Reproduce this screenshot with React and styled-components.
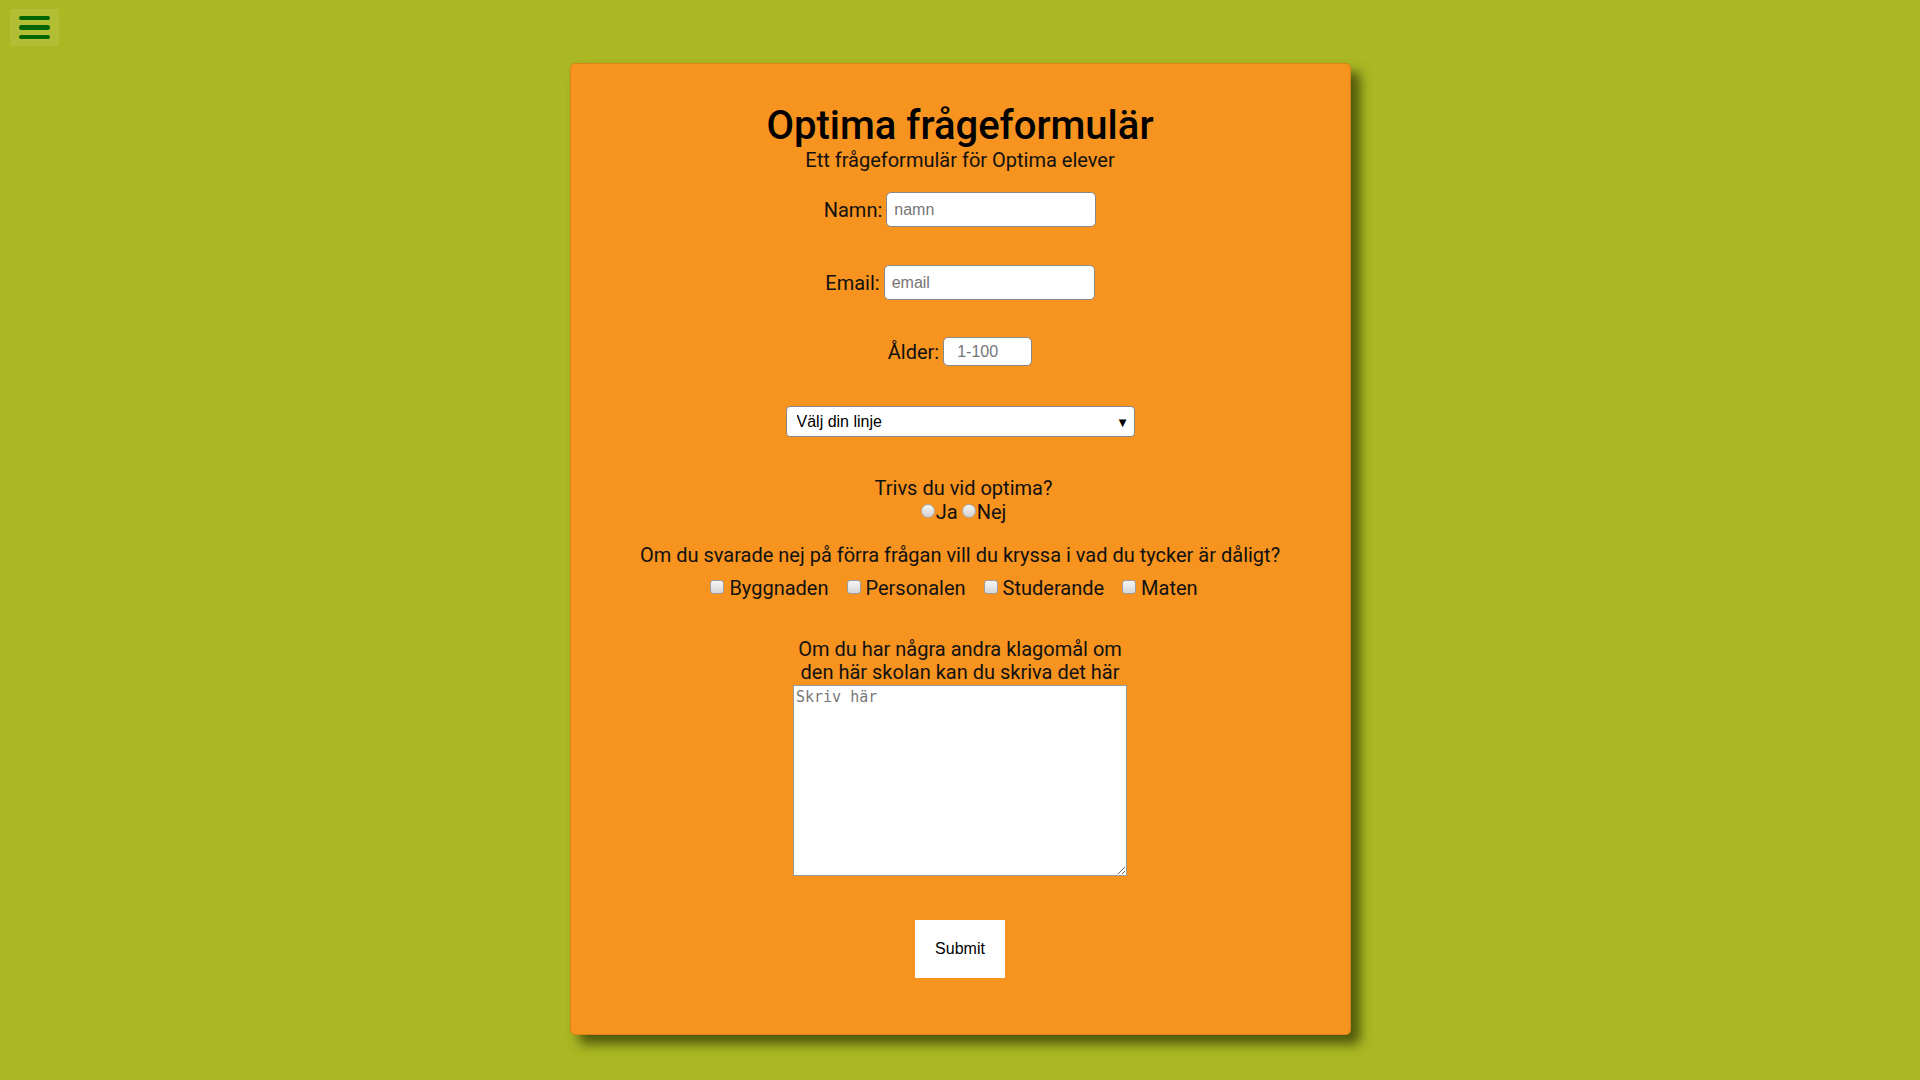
import React from "react";
import styled, { createGlobalStyle } from "styled-components";

const Global = createGlobalStyle`
  html, body { margin: 0; padding: 0; }
  body {
    background: #aab823;
    font-family: Roboto, "Liberation Sans", sans-serif;
    color: #111;
    min-height: 1080px;
  }
`;

const Page = styled.div`
  padding: 9px 10px 40px;
`;

const MenuButton = styled.button`
  display: flex;
  flex-direction: column;
  gap: 5px;
  width: 49px;
  height: 37px;
  padding: 7px 9px;
  box-sizing: border-box;
  background: #b2bf35;
  border: none;
  cursor: pointer;
`;

const Bar = styled.span`
  display: block;
  width: 31px;
  height: 5px;
  border-radius: 3px;
  background: #006400;
`;

const Card = styled.form`
  width: 781px;
  box-sizing: border-box;
  margin: 17px auto 0;
  padding: 40px 20px 56px;
  background: #f7931f;
  border: 1px solid #dc8218;
  border-radius: 5px;
  box-shadow: 9px 9px 12px rgba(40, 45, 0, 0.7);
  display: flex;
  flex-direction: column;
  align-items: center;
`;

const Title = styled.h1`
  margin: 0;
  font-size: 40px;
  line-height: 44px;
  font-weight: 500;
  color: #000;
`;

const Subtitle = styled.p`
  margin: 0;
  font-size: 20px;
  line-height: 24px;
`;

const FieldRow = styled.div`
  display: flex;
  align-items: center;
  gap: 4px;
  margin-top: ${(p) => p.$mt}px;
  font-size: 20px;
`;

const TextInput = styled.input`
  box-sizing: border-box;
  width: ${(p) => p.$w}px;
  height: ${(p) => p.$h}px;
  padding: 0 ${(p) => p.$pl}px;
  border: 1px solid #888;
  border-radius: 5px;
  background: #fff;
  font-family: "Liberation Sans", Arial, sans-serif;
  font-size: 16px;
  &::placeholder { color: #757575; }
`;

const SelectWrap = styled.div`
  position: relative;
  margin-top: 40px;
  &::after {
    content: "▼";
    position: absolute;
    right: 8px;
    top: 50%;
    transform: translateY(-50%);
    font-family: "DejaVu Sans", sans-serif;
    font-size: 10px;
    color: #000;
    pointer-events: none;
  }
`;

const Select = styled.select`
  appearance: none;
  box-sizing: border-box;
  width: 349px;
  height: 31px;
  padding: 0 10px;
  border: 1px solid #888;
  border-radius: 4px;
  background: #fff;
  font-family: "Liberation Sans", Arial, sans-serif;
  font-size: 16px;
  color: #000;
`;

const Question = styled.p`
  margin: ${(p) => p.$mt}px 0 0;
  padding-left: ${(p) => p.$shift || 0}px;
  font-size: 20px;
  line-height: 22px;
  text-align: center;
`;

const ChoiceRow = styled.div`
  display: flex;
  align-items: center;
  gap: ${(p) => p.$gap}px;
  margin-top: ${(p) => p.$mt}px;
  padding-left: ${(p) => p.$pl || 0}px;
  padding-right: ${(p) => p.$pr || 0}px;
  font-size: 20px;
  line-height: 22px;
`;

const Choice = styled.label`
  display: flex;
  align-items: ${(p) => (p.$top ? "flex-start" : "center")};
  gap: ${(p) => p.$gap}px;
`;

const Radio = styled.input.attrs({ type: "radio" })`
  appearance: none;
  width: 14px;
  height: 14px;
  margin: 3px 0 0;
  border-radius: 50%;
  border: 1px solid #aaa;
  background: linear-gradient(#f4f4f4, #d2d2d2);
  box-sizing: border-box;
`;

const Check = styled.input.attrs({ type: "checkbox" })`
  appearance: none;
  width: 14px;
  height: 14px;
  margin: 0 0 3px;
  border-radius: 3px;
  border: 1px solid #9c9c9c;
  background: linear-gradient(#f6f6f6, #d6d6d6);
  box-sizing: border-box;
`;

const AreaLabel = styled.label`
  display: block;
  margin-top: 39px;
  font-size: 20px;
  line-height: 23px;
  text-align: center;
`;

const TextArea = styled.textarea`
  display: block;
  box-sizing: border-box;
  width: 334px;
  height: 191px;
  margin-top: 1px;
  padding: 2px;
  border: 1px solid #999;
  background: #fff;
  font-family: "DejaVu Sans Mono", monospace;
  font-size: 15px;
  resize: both;
  &::placeholder { color: #777; }
`;

const SubmitButton = styled.button`
  margin-top: 44px;
  width: 90px;
  height: 58px;
  border: none;
  background: #fff;
  font-family: "Liberation Sans", Arial, sans-serif;
  font-size: 16px;
  color: #000;
  cursor: pointer;
`;

export default function App() {
  return (
    <>
      <Global />
      <Page>
        <MenuButton type="button" aria-label="Meny">
          <Bar />
          <Bar />
          <Bar />
        </MenuButton>
        <Card onSubmit={(e) => e.preventDefault()}>
          <Title>Optima frågeformulär</Title>
          <Subtitle>Ett frågeformulär för Optima elever</Subtitle>

          <FieldRow $mt={20}>
            <label htmlFor="namn">Namn:</label>
            <TextInput id="namn" placeholder="namn" $w={210} $h={35} $pl={7} />
          </FieldRow>
          <FieldRow $mt={38}>
            <label htmlFor="email">Email:</label>
            <TextInput id="email" placeholder="email" $w={211} $h={35} $pl={7} />
          </FieldRow>
          <FieldRow $mt={37}>
            <label htmlFor="alder">Ålder:</label>
            <TextInput id="alder" placeholder="1-100" $w={89} $h={29} $pl={13} />
          </FieldRow>

          <SelectWrap>
            <Select defaultValue="">
              <option value="">Välj din linje</option>
              <option>Naturvetenskap</option>
              <option>Samhällsvetenskap</option>
              <option>Teknik</option>
            </Select>
          </SelectWrap>

          <Question $mt={40} $shift={7}>Trivs du vid optima?</Question>
          <ChoiceRow $gap={4} $mt={2} $pl={7}>
            <Choice $top $gap={1}>
              <Radio name="trivs" />
              Ja
            </Choice>
            <Choice $top $gap={1}>
              <Radio name="trivs" />
              Nej
            </Choice>
          </ChoiceRow>

          <Question $mt={21}>
            Om du svarade nej på förra frågan vill du kryssa i vad du tycker är dåligt?
          </Question>
          <ChoiceRow $gap={18} $mt={11} $pr={12}>
            <Choice $gap={5}>
              <Check />
              Byggnaden
            </Choice>
            <Choice $gap={5}>
              <Check />
              Personalen
            </Choice>
            <Choice $gap={5}>
              <Check />
              Studerande
            </Choice>
            <Choice $gap={5}>
              <Check />
              Maten
            </Choice>
          </ChoiceRow>

          <AreaLabel htmlFor="klagomal">
            Om du har några andra klagomål om
            <br />
            den här skolan kan du skriva det här
          </AreaLabel>
          <TextArea id="klagomal" placeholder="Skriv här" />

          <SubmitButton type="submit">Submit</SubmitButton>
        </Card>
      </Page>
    </>
  );
}
